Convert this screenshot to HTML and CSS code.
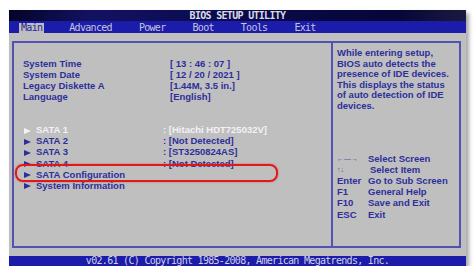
FILE: index.html
```html
<!DOCTYPE html>
<html>
<head>
<meta charset="utf-8">
<link rel="stylesheet" href="styles.css">
</head>
<body>
<div class="window">
  <div class="titlebar">BIOS SETUP UTILITY</div>
  <div class="menubar">
    <span class="tab active">Main</span>
    <span class="tab">Advanced</span>
    <span class="tab">Power</span>
    <span class="tab">Boot</span>
    <span class="tab">Tools</span>
    <span class="tab">Exit</span>
  </div>
  <div class="body">
    <div class="frame">
      <div class="left">
        <div class="group">
          <div class="row"><span>System Time</span><span>[ 13 : 46 : 07 ]</span></div>
          <div class="row"><span>System Date</span><span>[ 12 / 20 / 2021 ]</span></div>
          <div class="row"><span>Legacy Diskette A</span><span>[1.44M, 3.5 in.]</span></div>
          <div class="row"><span>Language</span><span>[English]</span></div>
        </div>
        <div class="group sata">
          <div class="row selected"><span><i class="arrow"></i>SATA 1</span><span>: [Hitachi HDT725032V]</span></div>
          <div class="row"><span><i class="arrow"></i>SATA 2</span><span>: [Not Detected]</span></div>
          <div class="row"><span><i class="arrow"></i>SATA 3</span><span>: [ST3250824AS]</span></div>
          <div class="row"><span><i class="arrow"></i>SATA 4</span><span>: [Not Detected]</span></div>
          <div class="row"><span><i class="arrow"></i>SATA Configuration</span><span></span></div>
          <div class="row"><span><i class="arrow"></i>System Information</span><span></span></div>
        </div>
        <div class="ring"></div>
      </div>
      <div class="right">
        <p class="help">While entering setup,<br>BIOS auto detects the<br>presence of IDE devices.<br>This displays the status<br>of auto detection of IDE<br>devices.</p>
        <div class="keys">
          <span class="k small">&larr;&mdash;&rarr;</span><span>Select Screen</span>
          <span class="k small">&uarr;&darr;</span><span class="shift">Select Item</span>
          <span class="k">Enter</span><span>Go to Sub Screen</span>
          <span class="k">F1</span><span>General Help</span>
          <span class="k">F10</span><span>Save and Exit</span>
          <span class="k">ESC</span><span>Exit</span>
        </div>
      </div>
    </div>
  </div>
  <div class="footer">v02.61 (C) Copyright 1985-2008, American Megatrends, Inc.</div>
</div>
</body>
</html>
```
FILE: styles.css
```css
html, body {
  margin: 0;
  padding: 0;
  background: #ffffff;
}
body {
  padding: 10px 0 0 9px;
}
.window {
  width: 457px;
  box-shadow: 3px 3px 4px rgba(0, 0, 0, 0.35);
}
.titlebar {
  height: 11px;
  line-height: 11px;
  background: linear-gradient(90deg, #04042a 0%, #121262 18%, #0a0a4c 50%, #060638 85%, #1a1a40 100%);
  color: #dcdce6;
  font-family: "DejaVu Sans Mono", monospace;
  font-weight: bold;
  font-size: 10px;
  letter-spacing: -0.7px;
  text-align: center;
}
.menubar {
  height: 12px;
  background: #1c1caa;
  display: flex;
  align-items: flex-end;
  gap: 23px;
  padding-left: 10px;
  font-family: "DejaVu Sans Mono", monospace;
  font-size: 10px;
  letter-spacing: -0.7px;
  color: #c6c6d8;
}
.tab {
  padding: 0 2px;
  height: 10px;
  line-height: 10px;
}
.tab.active {
  background: #bcbcc6;
  color: #2a2a8e;
}
.body {
  background: #bfbfbf;
  padding: 8px 5px 8px 3px;
}
.frame {
  height: 207px;
  box-sizing: border-box;
  border: 2px solid #5252b2;
  display: flex;
  font-family: "Liberation Sans", Arial, sans-serif;
  font-weight: bold;
  font-size: 9.5px;
  color: #2e2e9c;
}
.left {
  position: relative;
  width: 317px;
  padding: 15px 0 0 9px;
  box-sizing: border-box;
}
.row {
  display: grid;
  grid-template-columns: 147px 1fr;
  height: 11px;
  line-height: 11px;
  white-space: nowrap;
}
.sata {
  margin-top: 22px;
}
.sata .row {
  grid-template-columns: 140px 1fr;
  height: 11.2px;
  line-height: 11.2px;
}
.row.selected {
  color: #f2f2f8;
}
.arrow {
  display: inline-block;
  width: 0;
  height: 0;
  border-top: 3.5px solid transparent;
  border-bottom: 3.5px solid transparent;
  border-left: 7px solid currentColor;
  margin: 0 5px 0 1px;
  vertical-align: -0.5px;
}
.ring {
  position: absolute;
  left: 1px;
  top: 121px;
  width: 263px;
  height: 18px;
  box-sizing: border-box;
  border: 2.5px solid #e11818;
  border-radius: 8px;
  box-shadow: 0 0 2px rgba(220, 0, 0, 0.5), inset 0 0 1px rgba(255, 200, 200, 0.6);
}
.right {
  flex: 1;
  border-left: 2px solid #5252b2;
  padding: 5px 0 0 4px;
}
.help {
  margin: 0;
  line-height: 10.6px;
  white-space: nowrap;
}
.keys {
  margin-top: 41px;
  display: grid;
  grid-template-columns: 31px 1fr;
  grid-auto-rows: 11.2px;
  line-height: 11.2px;
  white-space: nowrap;
}
.k.small {
  font-size: 7px;
  font-weight: normal;
  color: #5050a8;
}
.shift {
  padding-left: 2px;
}
.footer {
  height: 10px;
  line-height: 10px;
  background: #1c1caa;
  color: #d2d2e2;
  font-family: "DejaVu Sans Mono", monospace;
  font-size: 10px;
  letter-spacing: -0.7px;
  text-align: center;
}
```
